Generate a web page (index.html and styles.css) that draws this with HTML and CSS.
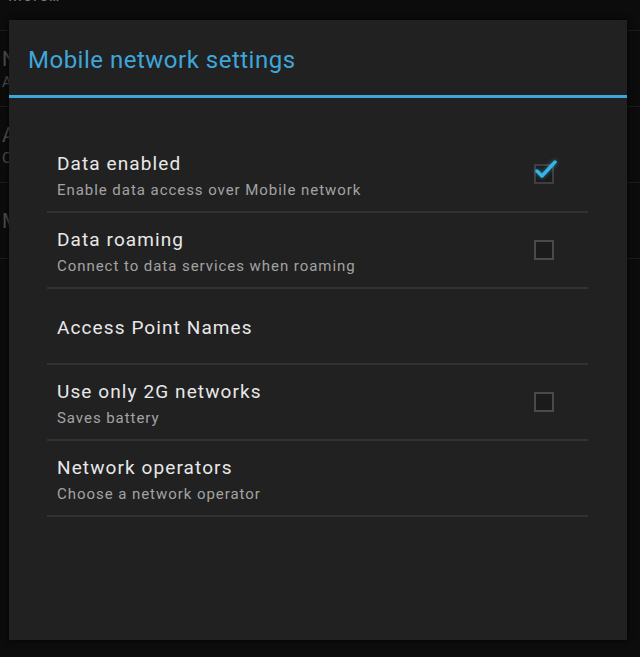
FILE: index.html
```html
<!DOCTYPE html>
<html lang="en">
<head>
    <meta charset="UTF-8">
    <meta name="viewport" content="width=device-width, initial-scale=1.0">
    <title>Mobile network settings</title>
    <link rel="stylesheet" href="styles.css">
</head>
<body>
    <div class="backdrop">
        <div class="bg-header"><span class="bg-header-text">More…</span></div>
        <div class="bg-row">
            <div class="bg-title">NFC</div>
            <div class="bg-summary">Allow data exchange when the tablet touches another device</div>
        </div>
        <div class="bg-row">
            <div class="bg-title">Android Beam</div>
            <div class="bg-summary">Off</div>
        </div>
        <div class="bg-row">
            <div class="bg-title">Mobile networks</div>
        </div>
    </div>

    <div class="dialog">
        <div class="dialog-title">Mobile network settings</div>
        <div class="pref-list">
            <div class="pref">
                <div class="pref-text">
                    <div class="pref-title">Data enabled</div>
                    <div class="pref-summary">Enable data access over Mobile network</div>
                </div>
                <div class="checkbox checked">
                    <svg class="tick" width="28" height="24" viewBox="0 0 28 24">
                        <path d="M5 14 L10 19 L23 5" fill="none" stroke="#35b4e6" stroke-width="3.4" stroke-linecap="round" stroke-linejoin="round"/>
                    </svg>
                </div>
            </div>
            <div class="pref">
                <div class="pref-text">
                    <div class="pref-title">Data roaming</div>
                    <div class="pref-summary">Connect to data services when roaming</div>
                </div>
                <div class="checkbox"></div>
            </div>
            <div class="pref">
                <div class="pref-text">
                    <div class="pref-title">Access Point Names</div>
                </div>
            </div>
            <div class="pref">
                <div class="pref-text">
                    <div class="pref-title">Use only 2G networks</div>
                    <div class="pref-summary">Saves battery</div>
                </div>
                <div class="checkbox"></div>
            </div>
            <div class="pref">
                <div class="pref-text">
                    <div class="pref-title">Network operators</div>
                    <div class="pref-summary">Choose a network operator</div>
                </div>
            </div>
        </div>
    </div>
</body>
</html>
```

FILE: styles.css
```css
body {
    margin: 0;
    height: 657px;
    overflow: hidden;
    background-color: #0c0c0c;
    font-family: Roboto, "Noto Sans", sans-serif;
    position: relative;
}

/* settings page behind the dialog */
.backdrop {
    color: #4c4c4c;
}

.bg-header {
    height: 30px;
    padding-left: 8px;
    border-bottom: 1px solid #1c1c1c;
    overflow: hidden;
}

.bg-header-text {
    display: block;
    margin-top: -13px;
    font-size: 16px;
    line-height: 18px;
    letter-spacing: 1px;
    color: #7a7a7a;
}

.bg-row {
    height: 75px;
    padding-left: 2px;
    border-bottom: 1px solid #1c1c1c;
    display: flex;
    flex-direction: column;
    justify-content: center;
    white-space: nowrap;
}

.bg-title {
    font-size: 20px;
    line-height: 26px;
}

.bg-summary {
    font-size: 15px;
    line-height: 20px;
}

/* dialog */
.dialog {
    position: absolute;
    left: 9px;
    top: 20px;
    width: 618px;
    height: 620px;
    background-color: #212121;
    box-shadow: 0 0 6px rgba(0, 0, 0, 0.8);
}

.dialog-title {
    height: 78px;
    box-sizing: border-box;
    padding-left: 19px;
    line-height: 80px;
    font-size: 24px;
    letter-spacing: 0.5px;
    color: #3ea6da;
    border-bottom: 3px solid #3ba7dc;
}

.pref-list {
    margin: 39px 39px 0 38px;
}

.pref {
    height: 76px;
    box-sizing: border-box;
    display: flex;
    align-items: center;
    padding: 3px 34px 0 10px;
    border-bottom: 2px solid #323232;
}

.pref-text {
    flex: 1;
}

.pref-title {
    font-size: 19px;
    line-height: 24px;
    letter-spacing: 1.1px;
    color: #e8e8e8;
}

.pref-summary {
    font-size: 15px;
    line-height: 20px;
    margin-top: 4px;
    letter-spacing: 0.95px;
    color: #a3a3a3;
}

.checkbox {
    width: 16px;
    height: 16px;
    margin-top: -3px;
    border: 2px solid #4a4a4a;
    background-color: #1b1b1b;
    position: relative;
}

.checkbox.checked {
    border-color: #3f3f3f;
}

.tick {
    position: absolute;
    left: -4px;
    top: -9px;
    filter: drop-shadow(0 0 2px rgba(53, 180, 230, 0.6));
}
```
